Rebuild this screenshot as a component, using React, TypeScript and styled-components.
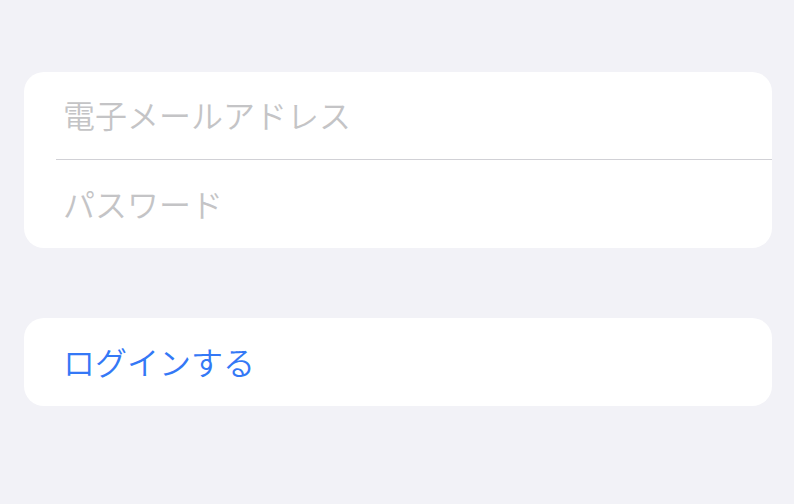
import { FC } from 'react';
import styled, { createGlobalStyle } from 'styled-components';

const GlobalStyle = createGlobalStyle`
    html, body {
        margin: 0;
        padding: 0;
        background: #f2f2f7;
    }
    body {
        font-family: "Noto Sans CJK JP", "Noto Sans", sans-serif;
    }
`

const Page = styled.div`
    display: flex;
    flex-direction: column;
    gap: 70px;
    padding: 72px 22px 0 24px;
    min-height: 504px;
    box-sizing: border-box;
`

const Card = styled.div`
    display: flex;
    flex-direction: column;
    background: #ffffff;
    border-radius: 20px;
    overflow: hidden;
`

const FieldRow = styled.div<{ $divider?: boolean }>`
    display: flex;
    align-items: center;
    height: ${props => props.$divider ? '87px' : '88px'};
    margin-left: 32px;
    padding-left: 7px;
    border-bottom: ${props => props.$divider ? '1px solid #d1d1d6' : 'none'};
`

const Field = styled.input`
    flex: 1;
    border: none;
    outline: none;
    background: transparent;
    padding: 0;
    margin-top: -3px;
    font-family: inherit;
    font-size: 32px;
    font-weight: 350;
    color: #1c1c1e;

    &::placeholder {
        color: #c4c4c6;
        opacity: 1;
    }
`

const ActionRow = styled.button`
    display: flex;
    align-items: center;
    height: 88px;
    padding: 0 0 3px 39px;
    border: none;
    background: transparent;
    font-family: inherit;
    font-size: 32px;
    font-weight: 350;
    color: #3478f6;
    text-align: left;
    cursor: pointer;
`

const App: FC = () => {
    return (
        <>
            <GlobalStyle />
            <Page>
                <Card>
                    <FieldRow $divider>
                        <Field type="email" placeholder="電子メールアドレス" />
                    </FieldRow>
                    <FieldRow>
                        <Field type="password" placeholder="パスワード" />
                    </FieldRow>
                </Card>
                <Card>
                    <ActionRow>ログインする</ActionRow>
                </Card>
            </Page>
        </>
    )
}

export default App
